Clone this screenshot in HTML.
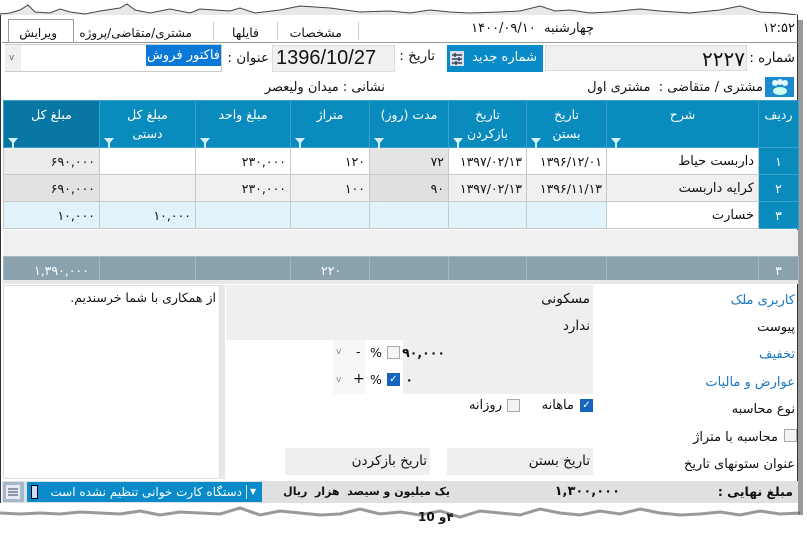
<!DOCTYPE html>
<html><head><meta charset="utf-8">
<style>
*{margin:0;padding:0;box-sizing:border-box}
body{width:807px;height:535px;background:#fff;position:relative;overflow:hidden;font-family:"DejaVu Sans","Liberation Sans",sans-serif;font-size:12.5px;color:#111}
.a{position:absolute}
.t{position:absolute;white-space:nowrap;direction:rtl;line-height:16px}
.blue{color:#1a78c2}
table{border-collapse:collapse;position:absolute;left:3px;table-layout:fixed}
td{border:1px solid #c8c8c8;height:27px;font-size:12.5px;text-align:right;padding:0 4px;white-space:nowrap}
.h td{background:#098cbd;color:#fff;border-color:#3aa3cc;vertical-align:top;height:47px;font-size:12.5px;position:relative;padding-top:4px;text-align:center;line-height:19px}
.h td.dk{background:#0776a3}
.f{position:absolute;left:4px;bottom:3px;width:0;height:0;border-left:5px solid transparent;border-right:5px solid transparent;border-top:6px solid #d8eef7}
.f:after{content:"";position:absolute;left:-1px;top:-1px;width:2px;height:5px;background:#d8eef7}
td.rn{background:#098cbd;color:#fff;text-align:center;border-color:#3aa3cc}
.cb{position:absolute;width:13px;height:13px;border:1px solid #aaa;background:#f4f4f4}
.cbc{position:absolute;width:13px;height:13px;background:#1565c0;color:#fff;font-size:10px;line-height:13px;text-align:center}
</style></head><body>
<svg class="a" style="left:0;top:0" width="807" height="22"><polyline fill="#e8e8e8" stroke="#444" stroke-width="1" points="0,14 10,13 20,10 28,5 35,12 50,13 60,9 70,12 85,14 100,11 120,8 127,4 135,10 150,13 170,9 190,13 200,9 230,11 240,8 255,13 280,10 300,6 330,8 360,12 390,11 410,13 430,10 450,12 470,13 500,12 520,11 540,6 555,11 570,10 590,13 610,12 640,9 660,11 690,13 720,10 740,6 760,12 780,13 797,15 797,22 0,22"/></svg>
<div class="a" style="left:0;top:15px;width:798px;height:495px;background:#fff;border-right:1px solid #333;border-left:1px solid #333"></div>
<div class="a" style="left:798px;top:20px;width:5px;height:495px;background:#999"></div>
<!-- tabs -->
<div class="a" style="left:8px;top:19px;width:66px;height:24px;border:1px solid #999;border-bottom:none;background:#fff"></div>
<div class="t" style="right:750px;top:25px;font-size:12px">ویرایش</div>
<div class="t" style="right:615px;top:25px;font-size:12px">مشتری/متقاضی/پروژه</div>
<div class="a" style="left:213px;top:22px;width:1px;height:18px;background:#ccc"></div>
<div class="t" style="right:548px;top:25px;font-size:12.5px">فایلها</div>
<div class="a" style="left:277px;top:22px;width:1px;height:18px;background:#ccc"></div>
<div class="t" style="right:465px;top:25px;font-size:12.5px">مشخصات</div>
<div class="a" style="left:358px;top:22px;width:1px;height:18px;background:#ccc"></div>
<div class="t" style="right:213px;top:21px;font-size:13px">چهارشنبه&nbsp; ۱۴۰۰/۰۹/۱۰</div>
<div class="t" style="right:12px;top:21px;font-size:13px">۱۲:۵۲</div>
<div class="a" style="left:2px;top:42px;width:796px;height:1px;background:#999"></div>
<!-- row 2 -->
<div class="t" style="right:12px;top:50px;font-size:13.5px">شماره :</div>
<div class="a" style="left:545px;top:45px;width:202px;height:26px;background:#f0f0f0;border:1px solid #ddd"></div>
<div class="t" style="right:62px;top:47px;font-size:20px;line-height:24px">۲۲۲۷</div>
<div class="a" style="left:447px;top:45px;width:96px;height:27px;background:#0a8bc9"></div>
<svg class="a" style="left:450px;top:51px" width="14" height="15"><rect x="0" y="0" width="14" height="15" fill="#dde"/><path d="M2 4h10M2 8h10M2 12h10" stroke="#345" stroke-width="1.5"/><path d="M5 2v4M9 6v4M6 10v4" stroke="#345" stroke-width="1.5"/></svg>
<div class="t" style="right:270px;top:50px;color:#fff;font-size:13px">شماره جدید</div>
<div class="t" style="right:372px;top:48px;font-size:13.5px">تاریخ :</div>
<svg class="a" style="left:373px;top:52px" width="12" height="14"><rect x="0.5" y="1.5" width="11" height="12" fill="#fff" stroke="#888"/><rect x="0.5" y="1.5" width="11" height="3" fill="#999"/><text x="2" y="12" font-size="7" fill="#d22" font-family="Liberation Sans">12</text></svg>
<div class="a" style="left:272px;top:45px;width:123px;height:27px;background:#f0f0f0;border:1px solid #ddd"></div>
<div class="a" style="left:276px;top:46px;font-family:'Liberation Sans',sans-serif;font-size:20px;line-height:24px">1396/10/27</div>
<div class="t" style="right:538px;top:50px;font-size:13.5px">عنوان :</div>
<div class="a" style="left:5px;top:44px;width:217px;height:28px;border:1px solid #ccc;background:#fff"></div>
<div class="a" style="left:5px;top:45px;width:16px;height:26px;background:#f0f0f0"></div>
<div class="t" style="left:9px;top:50px;color:#666;font-size:9px">v</div>
<div class="t" style="right:586px;top:45px;color:#fff;font-size:13px;background:#0a78d7;padding:2px 1px;line-height:17px">فاکتور فروش</div>
<!-- customer -->
<div class="a" style="left:765px;top:77px;width:29px;height:20px;background:#1a8bd0"></div>
<svg class="a" style="left:770px;top:78px" width="20" height="18"><circle cx="5" cy="5" r="3" fill="#dff"/><circle cx="10" cy="4" r="3" fill="#eef"/><circle cx="15" cy="5" r="3" fill="#dff"/><ellipse cx="10" cy="13" rx="7" ry="4" fill="#cfe"/></svg>
<div class="t" style="right:44px;top:80px;font-size:13px">مشتری / متقاضی :&nbsp; مشتری اول</div>
<div class="t" style="right:422px;top:80px;font-size:13px">نشانی : میدان ولیعصر</div>
<!-- grid -->
<table style="top:100px;width:795px">
<colgroup><col style="width:96px"><col style="width:96px"><col style="width:95px"><col style="width:79px"><col style="width:79px"><col style="width:78px"><col style="width:80px"><col style="width:152px"><col style="width:40px"></colgroup>
<tr class="h"><td class="dk">مبلغ کل<span class="f"></span></td><td>مبلغ کل<br>دستی<span class="f"></span></td><td>مبلغ واحد<span class="f"></span></td><td>متراژ<span class="f"></span></td><td>مدت (روز)<span class="f"></span></td><td>تاریخ<br>بازکردن<span class="f"></span></td><td>تاریخ<br>بستن<span class="f"></span></td><td>شرح<span class="f"></span></td><td>ردیف</td></tr>
<tr><td style="background:#ececec">۶۹۰,۰۰۰</td><td></td><td>۲۳۰,۰۰۰</td><td>۱۲۰</td><td style="background:#e4e4e4">۷۲</td><td>۱۳۹۷/۰۲/۱۳</td><td>۱۳۹۶/۱۲/۰۱</td><td style="font-size:13px">داربست حیاط</td><td class="rn">۱</td></tr>
<tr style="background:#f0f0f0"><td style="background:#e2e2e2">۶۹۰,۰۰۰</td><td></td><td>۲۳۰,۰۰۰</td><td>۱۰۰</td><td style="background:#e0e0e0">۹۰</td><td>۱۳۹۷/۰۲/۱۳</td><td>۱۳۹۶/۱۱/۱۳</td><td style="font-size:13px">کرایه داربست</td><td class="rn">۲</td></tr>
<tr style="background:#e1f2fa"><td>۱۰,۰۰۰</td><td>۱۰,۰۰۰</td><td></td><td></td><td></td><td></td><td></td><td style="background:#fff;font-size:13px">خسارت</td><td class="rn">۳</td></tr>
</table>
<div class="a" style="left:3px;top:230px;width:795px;height:26px;background:#f0f0f0"></div>
<table style="top:256px;width:795px">
<colgroup><col style="width:96px"><col style="width:96px"><col style="width:95px"><col style="width:79px"><col style="width:79px"><col style="width:78px"><col style="width:80px"><col style="width:152px"><col style="width:40px"></colgroup>
<tr style="background:#8aa2ad;color:#fff"><td style="height:23px;border-color:#a5b8c0;text-align:left;padding-left:30px">۱,۳۹۰,۰۰۰</td><td style="border-color:#a5b8c0"></td><td style="border-color:#a5b8c0"></td><td style="border-color:#a5b8c0;text-align:left;padding-left:30px">۲۲۰</td><td style="border-color:#a5b8c0"></td><td style="border-color:#a5b8c0"></td><td style="border-color:#a5b8c0"></td><td style="border-color:#a5b8c0"></td><td style="border-color:#a5b8c0;text-align:center">۳</td></tr>
</table>
<!-- bottom area -->
<div class="a" style="left:2px;top:280px;width:796px;height:4px;background:#e8e8e8"></div>
<div class="a" style="left:3px;top:285px;width:217px;height:194px;background:#fff;border:1px solid #ddd"></div>
<div class="a" style="left:220px;top:285px;width:5px;height:194px;background:#e8e8e8"></div>
<div class="t" style="right:591px;top:290px">از همکاری با شما خرسندیم.</div>
<div class="a" style="left:226px;top:285px;width:367px;height:55px;background:#efefef"></div>
<div class="a" style="left:403px;top:340px;width:190px;height:54px;background:#efefef"></div>
<div class="a" style="left:333px;top:340px;width:33px;height:54px;background:#f7f7f7"></div>
<div class="t blue" style="right:12px;top:293px;font-size:13px">کاربری ملک</div>
<div class="t" style="right:217px;top:291px;font-size:13.5px">مسکونی</div>
<div class="t" style="right:12px;top:320px;font-size:13px">پیوست</div>
<div class="t" style="right:217px;top:318px;font-size:13.5px">ندارد</div>
<div class="t blue" style="right:12px;top:347px;font-size:13px">تخفیف</div>
<div class="t" style="right:362px;top:345px;font-weight:bold">۹۰,۰۰۰</div>
<div class="cb" style="left:387px;top:346px"></div>
<div class="t" style="left:370px;top:345px">%</div>
<div class="t" style="left:356px;top:344px">-</div>
<div class="t" style="left:336px;top:344px;color:#888;font-size:9px">v</div>
<div class="t blue" style="right:12px;top:375px;font-size:13px">عوارض و مالیات</div>
<div class="t" style="right:394px;top:372px;font-weight:bold">۰</div>
<div class="cbc" style="left:387px;top:373px">✓</div>
<div class="t" style="left:370px;top:372px">%</div>
<div class="t" style="left:353px;top:371px;font-size:14px">+</div>
<div class="t" style="left:336px;top:372px;color:#888;font-size:9px">v</div>
<div class="t" style="right:12px;top:402px;font-size:13px">نوع محاسبه</div>
<div class="cbc" style="left:580px;top:399px">✓</div>
<div class="t" style="right:233px;top:398px;font-size:13px">ماهانه</div>
<div class="cb" style="left:507px;top:399px"></div>
<div class="t" style="right:305px;top:398px;font-size:13px">روزانه</div>
<div class="cb" style="left:784px;top:429px"></div>
<div class="t" style="right:29px;top:430px;font-size:13px">محاسبه با متراژ</div>
<div class="t" style="right:12px;top:457px;font-size:13px">عنوان ستونهای تاریخ</div>
<div class="a" style="left:447px;top:448px;width:146px;height:27px;background:#efefef"></div>
<div class="t" style="right:217px;top:453px;font-size:13.5px">تاریخ بستن</div>
<div class="a" style="left:285px;top:448px;width:145px;height:27px;background:#efefef"></div>
<div class="t" style="right:380px;top:453px;font-size:13.5px">تاریخ بازکردن</div>
<!-- status bar -->
<div class="a" style="left:2px;top:481px;width:796px;height:22px;background:#e0e0e0"></div>
<div class="t" style="right:14px;top:484px;font-weight:bold;font-size:12.5px">مبلغ نهایی :</div>
<div class="t" style="right:187px;top:484px;font-weight:bold;font-size:13px">۱,۳۰۰,۰۰۰</div>
<div class="t" style="right:357px;top:484px;font-weight:bold;font-size:11px">یک میلیون و سیصد&nbsp; هزار&nbsp; ریال</div>
<div class="a" style="left:27px;top:482px;width:235px;height:20px;background:#0a8bc9"></div>
<div class="t" style="right:565px;top:484px;color:#fff;font-size:12px">دستگاه کارت خوانی تنظیم نشده است</div>
<div class="a" style="left:31px;top:485px;width:7px;height:14px;border:1px solid #002;background:#cde"></div>
<div class="a" style="left:246px;top:485px;width:1px;height:14px;background:#ddd"></div>
<div class="t" style="left:250px;top:484px;color:#fff;font-size:8px">▼</div>
<div class="a" style="left:3px;top:482px;width:21px;height:20px;background:#a8b8cc"></div>
<svg class="a" style="left:6px;top:485px" width="14" height="14"><rect width="14" height="14" fill="#e6ecf4"/><path d="M2 4h10M2 7h10M2 10h10" stroke="#345"/></svg>
<!-- bottom torn edge -->
<svg class="a" style="left:0;top:503px" width="807" height="32"><polygon fill="#fff" points="0,0 798,0 798,8 780,9 760,6 740,10 720,7 700,9 680,10 660,8 640,4 620,9 600,6 580,10 560,8 540,4 520,10 500,8 480,6 460,12 440,6 420,10 400,7 380,9 360,4 340,9 320,10 300,8 280,6 260,10 240,3 220,9 200,8 180,7 160,10 140,6 120,9 100,8 80,7 60,9 40,8 20,9 0,8"/><polyline fill="none" stroke="#555" stroke-width="3" opacity="0.6" points="0,10 20,11 40,10 60,11 80,9 100,10 120,11 140,8 160,12 180,9 200,10 220,11 240,5 260,12 280,8 300,10 320,12 340,11 360,6 380,11 400,9 420,12 440,8 460,14 480,8 500,10 520,12 540,6 560,10 580,12 600,8 620,11 640,6 660,10 680,12 700,11 720,9 740,12 760,8 780,11 800,10"/></svg>
<div class="t" style="left:418px;top:509px;font-weight:bold;font-size:12px">۴و 10</div>
</body></html>
